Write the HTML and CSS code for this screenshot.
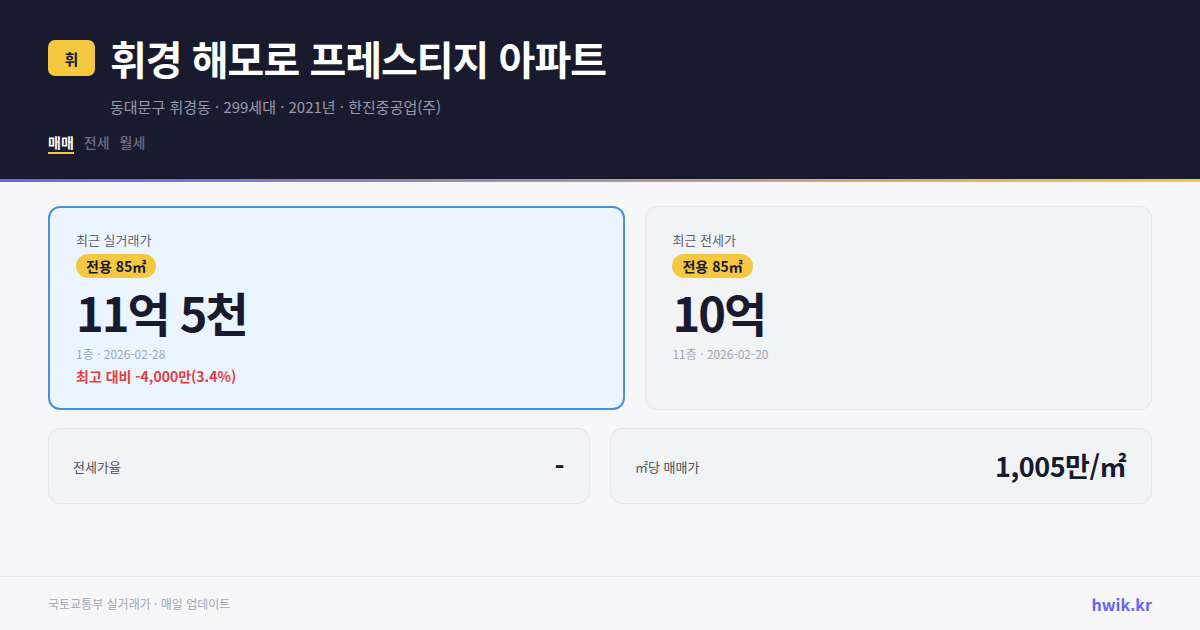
FILE: index.html
```html
<!DOCTYPE html>
<html lang="ko">
<head>
<meta charset="utf-8">
<title>휘경 해모로 프레스티지 아파트</title>
<link rel="stylesheet" href="styles.css">
</head>
<body>
<div class="page">
  <header class="header">
    <div class="title-row">
      <div class="logo">휘</div>
      <h1 class="title">휘경 해모로 프레스티지 아파트</h1>
    </div>
    <p class="subtitle">동대문구 휘경동 · 299세대 · 2021년 · 한진중공업(주)</p>
    <nav class="tabs">
      <span class="tab active">매매</span>
      <span class="tab">전세</span>
      <span class="tab">월세</span>
    </nav>
  </header>
  <div class="accent"></div>
  <main class="main">
    <section class="top-grid">
      <div class="card card-primary">
        <div class="card-label">최근 실거래가</div>
        <div class="area-badge">전용 85㎡</div>
        <div class="price">11억 5천</div>
        <div class="meta">1층 · 2026-02-28</div>
        <div class="diff">최고 대비 -4,000만(3.4%)</div>
      </div>
      <div class="card card-secondary">
        <div class="card-label">최근 전세가</div>
        <div class="area-badge">전용 85㎡</div>
        <div class="price">10억</div>
        <div class="meta">11층 · 2026-02-20</div>
      </div>
    </section>
    <section class="stat-grid">
      <div class="stat">
        <span class="stat-label">전세가율</span>
        <span class="stat-value">-</span>
      </div>
      <div class="stat">
        <span class="stat-label">㎡당 매매가</span>
        <span class="stat-value">1,005만/㎡</span>
      </div>
    </section>
  </main>
  <footer class="footer">
    <span class="source">국토교통부 실거래가 · 매일 업데이트</span>
    <span class="brand">hwik.kr</span>
  </footer>
</div>
</body>
</html>
```
FILE: styles.css
```css
* { box-sizing: border-box; margin: 0; padding: 0; }

html, body {
  width: 1200px;
  height: 630px;
  overflow: hidden;
}

body {
  font-family: "Noto Sans CJK KR", "Noto Sans", sans-serif;
  background: #f7f7fa;
  color: #1a1a2e;
}

.page {
  display: flex;
  flex-direction: column;
  height: 630px;
}

.header {
  background: #1a1a2e;
  height: 179px;
  padding: 32px 48px 0;
}

.title-row {
  display: flex;
  align-items: center;
  gap: 15px;
  height: 52px;
}

.logo {
  width: 47px;
  height: 36px;
  border-radius: 7px;
  background: #f5c842;
  color: #1a1a2e;
  font-weight: 700;
  font-size: 15px;
  display: flex;
  align-items: center;
  justify-content: center;
}

.title {
  color: #ffffff;
  font-size: 40px;
  font-weight: 700;
  letter-spacing: -1px;
  line-height: 52px;
}

.subtitle {
  margin: 12px 0 0 62px;
  font-size: 15px;
  line-height: 22px;
  color: #9a9aae;
}

.tabs {
  display: flex;
  gap: 10px;
  margin-top: 15px;
}

.tab {
  font-size: 14px;
  line-height: 18px;
  color: #6e6e82;
  font-weight: 500;
  padding-bottom: 1px;
  border-bottom: 2px solid transparent;
}

.tab.active {
  color: #ffffff;
  font-weight: 700;
  border-bottom-color: #f5c842;
}

.accent {
  height: 3px;
  background: linear-gradient(90deg, #6366f1 0%, #f5c842 100%);
}

.main {
  flex: 1;
  padding: 24px 48px 0;
}

.top-grid {
  display: grid;
  grid-template-columns: 1.14fr 1fr;
  gap: 20px;
}

.card {
  border-radius: 12px;
  display: flex;
  flex-direction: column;
  align-items: flex-start;
}

.card-primary {
  background: #ebf5ff;
  border: 2px solid #4a90d9;
  padding: 23px 26px 22px;
}

.card-secondary {
  background: #f2f3f5;
  border: 1px solid #e4e6ea;
  padding: 24px 26px 23px;
}

.card-label {
  font-size: 13px;
  line-height: 18px;
  color: #5f6470;
}

.area-badge {
  margin-top: 5px;
  height: 24px;
  padding: 0 10px;
  border-radius: 12px;
  background: #f5c842;
  color: #1a1a2e;
  font-size: 14px;
  font-weight: 700;
  line-height: 24px;
}

.price {
  margin-top: 9px;
  font-size: 47px;
  font-weight: 700;
  letter-spacing: -2px;
  line-height: 50px;
  color: #1a1a2e;
}

.meta {
  margin-top: 9px;
  font-size: 12px;
  line-height: 16px;
  color: #a0a6b4;
}

.diff {
  margin-top: 4px;
  font-size: 14px;
  font-weight: 700;
  line-height: 20px;
  color: #e53e3e;
}

.stat-grid {
  display: grid;
  grid-template-columns: 1fr 1fr;
  gap: 20px;
  margin-top: 18px;
}

.stat {
  background: #f2f3f5;
  border: 1px solid #e4e6ea;
  border-radius: 12px;
  padding: 20px 25px 20px 24px;
  display: flex;
  align-items: center;
  justify-content: space-between;
}

.stat-label {
  font-size: 13px;
  color: #4a5060;
}

.stat-value {
  font-size: 27px;
  font-weight: 700;
  line-height: 34px;
  letter-spacing: -0.5px;
  color: #1a1a2e;
}

.footer {
  height: 54px;
  border-top: 1px solid #e4e6ea;
  padding: 0 48px;
  display: flex;
  align-items: center;
  justify-content: space-between;
}

.source {
  font-size: 12px;
  color: #a0a4b0;
}

.brand {
  font-size: 16px;
  font-weight: 700;
  color: #6366f1;
}
```
